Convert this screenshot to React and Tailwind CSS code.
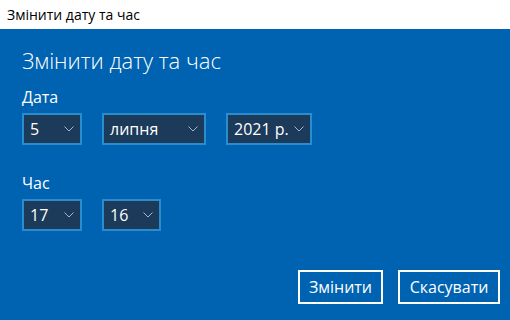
import React from "react";

const Chevron = () => (
  <svg width="10" height="6" viewBox="0 0 10 6" className="shrink-0">
    <path d="M0.5 0.5 L5 5 L9.5 0.5" fill="none" stroke="#a3b6ca" strokeWidth="1" />
  </svg>
);

const Select = ({ value, width }) => (
  <div className={`flex h-[32px] items-center justify-between border-2 border-[#2a8dcd] bg-[#1c3a5a] pl-[6px] pr-[6px] text-[16px] text-white ${width}`}>
    <span>{value}</span>
    <Chevron />
  </div>
);

export default function App() {
  return (
    <div className="flex h-[320px] w-[510px] flex-col overflow-hidden font-['Open_Sans',sans-serif]">
      <div className="flex h-[29px] shrink-0 items-center bg-white pl-[7px] text-[14px] text-black">
        Змінити дату та час
      </div>

      <div className="flex flex-1 flex-col bg-[#0063b1] pl-[22px] text-white">
        <h1 className="mt-[16px] text-[22px] font-light leading-[30px]">Змінити дату та час</h1>

        <p className="mt-[12px] text-[16px] leading-[20px]">Дата</p>
        <div className="mt-[6px] flex gap-[20px]">
          <Select value="5" width="w-[60px]" />
          <Select value="липня" width="w-[104px]" />
          <Select value="2021 р." width="w-[86px]" />
        </div>

        <p className="mt-[28px] text-[16px] leading-[20px]">Час</p>
        <div className="mt-[6px] flex gap-[20px]">
          <Select value="17" width="w-[60px]" />
          <Select value="16" width="w-[59px]" />
        </div>

        <div className="mt-auto mb-[16px] flex justify-end gap-[15px] pr-[10px]">
          <button className="h-[34px] w-[85px] border-2 border-white text-[16px]">Змінити</button>
          <button className="h-[34px] w-[102px] border-2 border-white text-[16px]">Скасувати</button>
        </div>
      </div>
    </div>
  );
}
